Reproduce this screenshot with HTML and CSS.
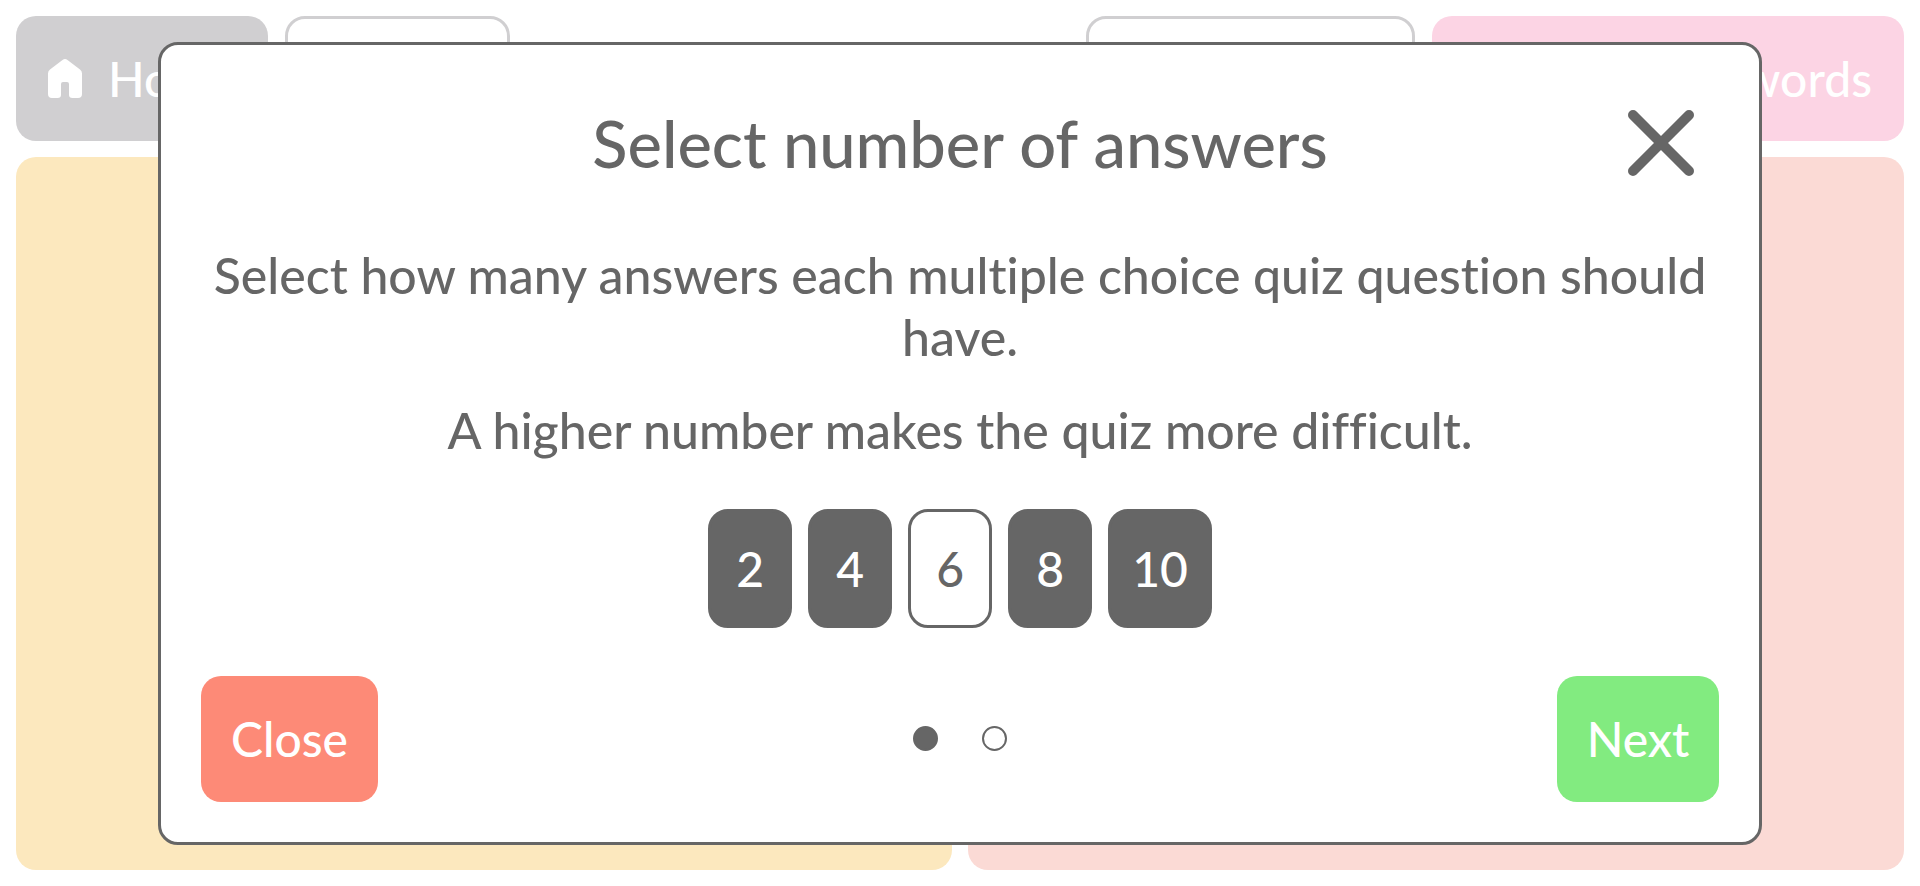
FILE: index.html
```html
<!DOCTYPE html>
<html lang="en">
<head>
  <meta charset="UTF-8" />
  <meta name="viewport" content="width=device-width, initial-scale=1.0" />
  <title>Select number of answers</title>
  <link rel="stylesheet" href="styles.css">
</head>
<body>
  <div class="app">
    <header class="toolbar">
      <button type="button" class="tool home">
        <svg class="home-icon" viewBox="0 0 34 39" aria-hidden="true">
          <path d="M14.5 1 Q17 -0.8 19.5 1 L32 10.5 Q34 12 34 14.5 V35 Q34 39 30 39 H24.5 Q21 39 21 36 V25 Q21 23 19 23 H15 Q13 23 13 25 V36 Q13 39 9.5 39 H4 Q0 39 0 35 V14.5 Q0 12 2 10.5 Z" fill="#fff"/>
        </svg>
        <span>Home</span>
      </button>
      <div class="box box-small"></div>
      <div class="spacer"></div>
      <div class="box box-large"></div>
      <button type="button" class="tool words">words</button>
    </header>
    <main class="panels">
      <section class="panel panel-yellow"></section>
      <section class="panel panel-red"></section>
    </main>
  </div>

  <div class="overlay">
    <div class="modal" role="dialog" aria-labelledby="modal-title">
      <div class="modal-header">
        <h1 id="modal-title">Select number of answers</h1>
        <button type="button" class="modal-x" aria-label="Close">
          <svg viewBox="0 0 66 66" aria-hidden="true">
            <path d="M5 5 L61 61 M61 5 L5 61" stroke="#666" stroke-width="10" stroke-linecap="round"/>
          </svg>
        </button>
      </div>

      <div class="modal-text">
        <p>Select how many answers each multiple choice quiz question should have.</p>
        <p>A higher number makes the quiz more difficult.</p>
      </div>

      <div class="answers">
        <button type="button">2</button>
        <button type="button">4</button>
        <button type="button" class="selected">6</button>
        <button type="button">8</button>
        <button type="button">10</button>
      </div>

      <div class="modal-footer">
        <button type="button" class="btn btn-close">Close</button>
        <div class="dots">
          <span class="dot active"></span>
          <span class="dot"></span>
        </div>
        <button type="button" class="btn btn-next">Next</button>
      </div>
    </div>
  </div>
</body>
</html>
```
FILE: styles.css
```css
* {
  box-sizing: border-box;
}

body {
  margin: 0;
  background: #fff;
  color: #666;
  font-family: Lato, sans-serif;
  font-size: 48px;
  font-weight: 500;
  font-variant-ligatures: no-common-ligatures;
}

button {
  border: none;
  padding: 0;
  font: inherit;
  cursor: pointer;
}

.app {
  display: flex;
  flex-direction: column;
  gap: 16px;
  min-height: 100vh;
  padding: 16px;
}

.toolbar {
  display: flex;
  gap: 17px;
  height: 125px;
}

.tool {
  display: flex;
  align-items: center;
  padding: 0 32px;
  border-radius: 20px;
  color: #fff;
}

.home {
  gap: 26px;
  width: 252px;
  background: #d0cfd1;
}

.home-icon {
  width: 34px;
  height: 39px;
  flex-shrink: 0;
}

.words {
  justify-content: flex-end;
  width: 472px;
  background: #fcd4e4;
}

.box {
  border: 3px solid #d0cfd1;
  border-radius: 20px;
}

.box-small {
  width: 225px;
}

.box-large {
  width: 329px;
}

.spacer {
  flex: 1;
}

.panels {
  display: flex;
  flex: 1;
  gap: 16px;
}

.panel {
  flex: 1;
  border-radius: 20px;
}

.panel-yellow {
  background: #fce8be;
}

.panel-red {
  background: #fbdad5;
}

.overlay {
  position: fixed;
  inset: 0;
  display: flex;
  align-items: center;
  justify-content: center;
  padding: 0 158px;
}

.modal {
  width: 100%;
  padding: 40px;
  border: 3px solid #666;
  border-radius: 20px;
  background: #fff;
}

.modal-header {
  display: grid;
  grid-template-columns: 116px 1fr 116px;
  align-items: center;
}

.modal-header h1 {
  grid-column: 2;
  margin: 0;
  font-size: 65px;
  font-weight: 500;
  text-align: center;
}

.modal-x {
  height: 116px;
  background: none;
}

.modal-x svg {
  display: block;
  width: 66px;
  margin: auto;
}

.modal-text {
  margin: 43px 0 48px;
  font-size: 50px;
  line-height: 62px;
  text-align: center;
}

.modal-text p {
  margin: 0 0 31px;
}

.modal-text p:last-child {
  margin-bottom: 0;
}

.answers {
  display: flex;
  justify-content: center;
  gap: 16px;
  margin-bottom: 48px;
}

.answers button {
  min-width: 84px;
  height: 119px;
  padding: 0 21px;
  border: 3px solid #666;
  border-radius: 20px;
  background: #666;
  color: #fff;
}

.answers .selected {
  background: #fff;
  color: #666;
}

.modal-footer {
  display: grid;
  grid-template-columns: 1fr auto 1fr;
  align-items: center;
}

.btn {
  height: 126px;
  border-radius: 20px;
  color: #fff;
}

.btn-close {
  width: 177px;
  background: #fd8a77;
}

.btn-next {
  justify-self: end;
  width: 162px;
  background: #82eb80;
}

.dots {
  display: flex;
  gap: 44px;
}

.dot {
  width: 25px;
  height: 25px;
  border: 2px solid #666;
  border-radius: 50%;
}

.dot.active {
  background: #666;
}
```
